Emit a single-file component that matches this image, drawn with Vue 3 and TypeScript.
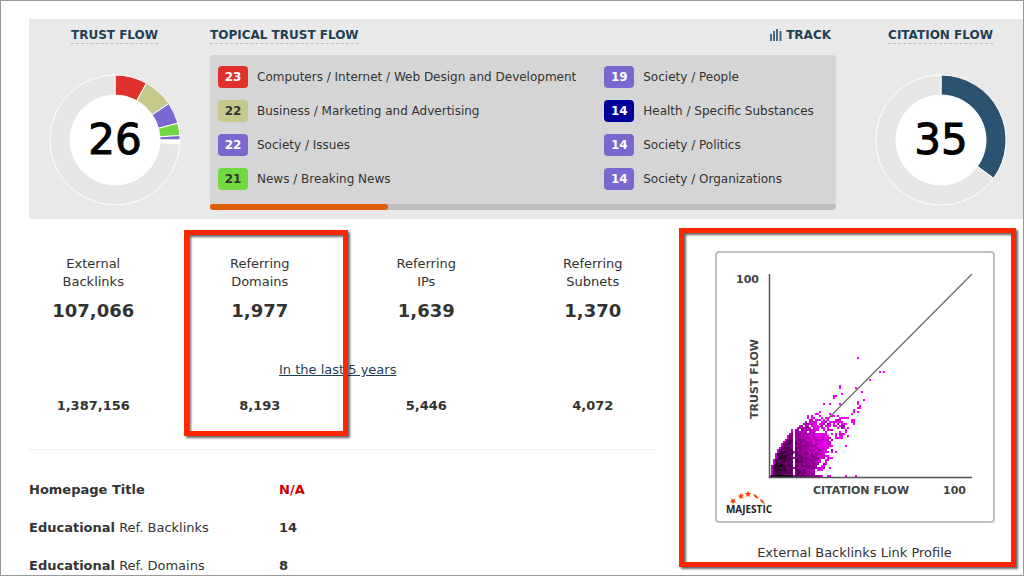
<script setup lang="ts">
interface Topic {
  score: number
  label: string
  bg: string
  dark?: boolean
}

interface Metric {
  lines: [string, string]
  current: string
  historic: string
}

interface Cell {
  x: number
  y: number
  fill: string
}

const topics: Topic[] = [
  { score: 23, label: 'Computers / Internet / Web Design and Development', bg: '#e0322d' },
  { score: 22, label: 'Business / Marketing and Advertising', bg: '#c6c98b', dark: true },
  { score: 22, label: 'Society / Issues', bg: '#7a67d0' },
  { score: 21, label: 'News / Breaking News', bg: '#72d941', dark: true },
  { score: 19, label: 'Society / People', bg: '#7a67d0' },
  { score: 14, label: 'Health / Specific Substances', bg: '#000099' },
  { score: 14, label: 'Society / Politics', bg: '#7a67d0' },
  { score: 14, label: 'Society / Organizations', bg: '#7a67d0' },
]

const metrics: Metric[] = [
  { lines: ['External', 'Backlinks'], current: '107,066', historic: '1,387,156' },
  { lines: ['Referring', 'Domains'], current: '1,977', historic: '8,193' },
  { lines: ['Referring', 'IPs'], current: '1,639', historic: '5,446' },
  { lines: ['Referring', 'Subnets'], current: '1,370', historic: '4,072' },
]

const sector = (from: number, to: number): string => {
  const at = (deg: number, r: number): string => {
    const a = (deg * Math.PI) / 180
    return `${(66 + r * Math.sin(a)).toFixed(2)} ${(66 - r * Math.cos(a)).toFixed(2)}`
  }
  const large = to - from > 180 ? 1 : 0
  return `M${at(from, 65)}A65 65 0 ${large} 1 ${at(to, 65)}L${at(to, 45)}A45 45 0 ${large} 0 ${at(from, 45)}Z`
}

const trustSlices = [
  { d: sector(0, 29), fill: '#e0322d' },
  { d: sector(29, 56), fill: '#c6c98b' },
  { d: sector(56, 75), fill: '#7a67d0' },
  { d: sector(75, 86), fill: '#72d941' },
  { d: sector(86, 90), fill: '#7a67d0' },
  { d: sector(90, 93.6), fill: '#ffffff' },
  { d: sector(93.6, 360), fill: '#e6e6e4' },
]

const citationSlices = [
  { d: sector(0, 126), fill: '#2b526e' },
  { d: sector(126, 360), fill: '#e6e6e4' },
]

// Scatter cells: one per (citation, trust) pair, two units wide.
const leftEdge = [0, 1, 1, 1, 1, 1, 2, 2, 2, 3, 3, 3, 4, 4, 5, 6, 6, 7, 8, 9, 9, 10, 11, 11, 14, 15, 16, 18, 20]
const rightEdge = [25, 22, 22, 22, 23, 23, 24, 24, 25, 26, 27, 27, 28, 28, 29, 29, 30, 30, 29, 29, 28, 27, 25, 24, 24, 24, 23, 23, 23]
const farEdge = [26, 24, 25, 26, 28, 29, 28, 29, 30, 30, 30, 30, 31, 31, 31, 31, 31, 32, 33, 36, 37, 37, 38, 38, 39, 38, 37, 36, 36]
const outliers: [number, number][] = [
  [44, 59], [55, 52], [57, 52], [50, 48], [43, 44], [46, 42], [47, 38], [35, 45], [35, 44], [36, 41],
  [32, 40], [33, 40], [32, 39], [27, 36], [30, 36], [35, 36], [44, 37], [44, 36], [45, 35], [45, 34],
  [44, 34], [42, 33], [44, 32], [42, 32], [41, 31], [25, 32], [24, 31], [23, 31], [25, 30], [19, 30],
  [19, 29], [21, 30], [21, 29], [22, 29], [31, 30], [32, 30], [34, 30], [30, 31], [29, 29], [28, 29],
  [27, 28], [26, 29], [35, 29], [36, 29], [37, 29], [38, 29], [39, 29], [41, 28], [42, 28], [42, 27],
  [42, 26], [41, 27], [33, 28], [33, 27], [30, 27], [31, 27], [32, 26], [36, 26], [37, 26], [38, 26],
  [39, 24], [38, 23], [39, 20], [38, 15], [33, 12], [31, 12], [31, 9], [30, 4], [38, 0], [43, 0],
  [29, 0], [30, 0], [26, 29], [27, 27], [24, 28], [25, 28], [26, 27],
]

const noise = (a: number, b: number): number => {
  const v = Math.sin(a * 127.1 + b * 311.7) * 43758.5453
  return v - Math.floor(v)
}

const shade = (c: number, r: number): string => {
  let level: number
  if (r === 0) {
    level = c < 12 ? 12 : 30 + c * 5
  } else {
    level = 55 + Math.max(0, c - 4) * 6 + Math.max(0, r - 8) * 3
    level += (noise(c, r) - 0.5) * 70
  }
  if (c === (leftEdge[r] ?? 0)) level = 200
  if (c >= 26 && r > 0) level = Math.max(level, 200)
  const v = Math.round(Math.min(235, Math.max(18, level)))
  return `rgb(${v},0,${v})`
}

const cells: Cell[] = []
const place = (c: number, r: number, fill: string): void => {
  cells.push({ x: 52 + c * 2, y: 222 - r * 2, fill })
}
leftEdge.forEach((start, r) => {
  for (let c = start; c <= farEdge[r]; c++) {
    if (c === 12) {
      if ([0, 4, 9, 12].includes(r)) place(c, r, '#b000b0')
      continue
    }
    const n = noise(c * 3 + 1, r * 7 + 2)
    if (c <= rightEdge[r]) {
      if (r > 21 && c > 14 && n < 0.22) continue
      place(c, r, shade(c, r))
    } else if (n < 0.5) {
      place(c, r, n < 0.1 ? '#a000a0' : '#f000f0')
    }
  }
})
outliers.forEach(([c, r]) => place(c, r, '#f400f4'))

const star = 'M0-3.200L1-1.100L3.200-.9L1.500.6L2 2.900L0 1.700L-2 2.900L-1.500.6L-3.200-.9L-1-1.100Z'
</script>

<template>
  <main class="page">
    <section class="flow">
      <div class="gauge">
        <h2 class="title"><span class="dotted">TRUST FLOW</span></h2>
        <svg class="donut" viewBox="0 0 132 132" role="img" aria-label="Trust flow 26">
          <circle cx="66" cy="66" r="46" fill="#fff" />
          <path v-for="(s, i) in trustSlices" :key="i" :d="s.d" :fill="s.fill" stroke="#fff" />
          <text x="66" y="80" text-anchor="middle" class="score">26</text>
        </svg>
      </div>
      <div class="topical">
        <div class="head">
          <h2 class="title"><span class="dotted">TOPICAL TRUST FLOW</span></h2>
          <button type="button" class="track">
            <svg width="12" height="14" viewBox="0 0 12 14" aria-hidden="true">
              <path d="M1 13V6M4 13V3M7 13V1M10.500 13V3" stroke="#4a6b85" stroke-width="2" fill="none" />
            </svg>
            TRACK
          </button>
        </div>
        <div class="panel">
          <ul class="topics">
            <li v-for="(t, i) in topics" :key="i">
              <span class="badge" :class="{ dark: t.dark }" :style="{ background: t.bg }">{{ t.score }}</span>
              {{ t.label }}
            </li>
          </ul>
          <div class="scroll"><div class="thumb"></div></div>
        </div>
      </div>
      <div class="gauge">
        <h2 class="title"><span class="dotted">CITATION FLOW</span></h2>
        <svg class="donut" viewBox="0 0 132 132" role="img" aria-label="Citation flow 35">
          <circle cx="66" cy="66" r="46" fill="#fff" />
          <path v-for="(s, i) in citationSlices" :key="i" :d="s.d" :fill="s.fill" stroke="#fff" />
          <text x="66" y="80" text-anchor="middle" class="score">35</text>
        </svg>
      </div>
    </section>

    <div class="lower">
      <section class="stats">
        <table class="metrics">
          <thead>
            <tr>
              <th v-for="m in metrics" :key="m.lines.join()" scope="col">{{ m.lines[0] }}<br />{{ m.lines[1] }}</th>
            </tr>
          </thead>
          <tbody>
            <tr class="current">
              <td v-for="m in metrics" :key="m.current">{{ m.current }}</td>
            </tr>
            <tr class="period">
              <td colspan="4"><a href="#history">In the last 5 years</a></td>
            </tr>
            <tr class="historic">
              <td v-for="m in metrics" :key="m.historic">{{ m.historic }}</td>
            </tr>
          </tbody>
        </table>
        <div class="mark domains"></div>
        <table class="details">
          <tbody>
            <tr>
              <th scope="row"><b>Homepage Title</b></th>
              <td class="missing">N/A</td>
            </tr>
            <tr>
              <th scope="row"><b>Educational</b> Ref. Backlinks</th>
              <td>14</td>
            </tr>
            <tr>
              <th scope="row"><b>Educational</b> Ref. Domains</th>
              <td>8</td>
            </tr>
          </tbody>
        </table>
      </section>

      <section class="profile">
        <figure>
          <svg class="plot" viewBox="0 0 276 268" role="img" aria-label="External backlinks link profile">
            <path d="M52 225L255 21" stroke="#666" stroke-width="1.200" />
            <rect v-for="(c, i) in cells" :key="i" :x="c.x" :y="c.y" width="2" height="2" :fill="c.fill" shape-rendering="crispEdges" />
            <path d="M52.500 21V224.500H255" stroke="#555" stroke-width="1.500" fill="none" />
            <text x="42" y="30" text-anchor="end" class="axis">100</text>
            <text x="249" y="241" text-anchor="end" class="axis">100</text>
            <text x="144" y="241" text-anchor="middle" class="axis">CITATION FLOW</text>
            <text transform="translate(41 126) rotate(-90)" text-anchor="middle" class="axis">TRUST FLOW</text>
            <g fill="#f03a12" stroke="#ffb35c" stroke-width=".3">
              <path :d="star" transform="translate(16 248) rotate(-30)" />
              <path :d="star" transform="translate(24 243) rotate(-15)" />
              <path :d="star" transform="translate(31 241)" />
              <path d="M36 241L39 242L42 245.500L38 244.500Z" />
              <path d="M43 245.500L46 247.500L48 251.500L44 249Z" />
            </g>
            <text x="32" y="260" text-anchor="middle" class="brand">MAJESTIC</text>
          </svg>
          <figcaption>External Backlinks Link Profile</figcaption>
          <div class="mark whole"></div>
        </figure>
      </section>
    </div>
  </main>
</template>

<style>
body {
  margin: 0;
  background: #fff;
}
</style>

<style scoped>
.page {
  box-sizing: border-box;
  height: 100vh;
  overflow: hidden;
  padding: 18px 0 0 9px;
  border: 1px solid #999;
  background: #fff;
  color: #333;
  font: 13px/18px "DejaVu Sans", Verdana, sans-serif;
}

.flow {
  display: grid;
  grid-template-columns: 171px 1fr 165px;
  box-sizing: border-box;
  height: 200px;
  margin-left: 19px;
  background: #e9e9e9;
  font-size: 12px;
}

.gauge {
  display: flex;
  flex-direction: column;
  align-items: center;
  padding-top: 8px;
}

.title {
  margin: 0;
  color: #1f3f55;
  font-size: 12px;
  line-height: 16px;
}

.dotted {
  display: block;
  border-bottom: 1px dashed #bbb;
}

.donut {
  width: 132px;
  height: 132px;
  margin-top: 30px;
}

.score {
  fill: #000;
  stroke: #000;
  stroke-width: 1px;
  font: 42px "DejaVu Sans", Verdana, sans-serif;
}

.topical {
  margin: 0 22px 0 10px;
  padding-top: 8px;
}

.head {
  display: flex;
  justify-content: space-between;
  align-items: flex-start;
}

.track {
  display: flex;
  align-items: center;
  gap: 4px;
  margin: 0;
  padding: 0 5px 0 0;
  border: 0;
  background: none;
  color: #1f3f55;
  font: bold 12px/16px "DejaVu Sans", Verdana, sans-serif;
}

.panel {
  display: flex;
  flex-direction: column;
  margin-top: 11px;
  border-radius: 4px;
  background: #d5d5d5;
}

.topics {
  display: grid;
  grid-template-columns: 5fr 3fr;
  grid-template-rows: repeat(4, 22px);
  grid-auto-flow: column;
  row-gap: 12px;
  margin: 0;
  padding: 11px 0 14px 8px;
  list-style: none;
}

.topics li {
  display: flex;
  align-items: center;
  gap: 9px;
  white-space: nowrap;
}

.badge {
  width: 30px;
  border-radius: 4px;
  color: #fff;
  font-weight: bold;
  line-height: 22px;
  text-align: center;
}

.badge.dark {
  color: #333;
}

.scroll {
  height: 6px;
  border-radius: 3px;
  background: #bdbdbd;
}

.thumb {
  width: 28.5%;
  height: 6px;
  border-radius: 3px;
  background: #e25c04;
}

.lower {
  display: grid;
  grid-template-columns: 666px 1fr;
}

.stats {
  position: relative;
}

.metrics {
  width: 100%;
  table-layout: fixed;
  border-collapse: collapse;
  text-align: center;
}

.metrics th,
.metrics td {
  padding: 0;
}

.metrics th {
  padding-top: 36px;
  font-weight: normal;
}

.current td {
  height: 40px;
  font-size: 18px;
  font-weight: bold;
}

.metrics .period td {
  padding: 30px 0 18px 269px;
  text-align: left;
}

.period a {
  color: #1f3f55;
}

.historic td {
  font-weight: bold;
}

.details {
  width: calc(100% - 39px);
  margin: 34px 20px 0 19px;
  border-top: 1px solid #eee;
  border-collapse: separate;
  border-spacing: 0;
  padding-top: 21px;
  text-align: left;
}

.details th {
  width: 250px;
  height: 38px;
  padding: 0;
  font-weight: normal;
}

.details td {
  padding: 0;
  font-weight: bold;
}

.details .missing {
  color: #c00;
}

.mark {
  position: absolute;
  box-sizing: border-box;
  border: 5px solid #ff2600;
  filter: drop-shadow(2px 2px 1px rgba(0, 0, 0, 0.6));
  pointer-events: none;
}

.domains {
  top: 11px;
  left: 174px;
  width: 164px;
  height: 206px;
}

.profile {
  height: 353px;
  padding: 9px 7px 0 3px;
  border-bottom: 1px solid #ddd;
}

figure {
  position: relative;
  display: flex;
  flex-direction: column;
  align-items: center;
  box-sizing: border-box;
  height: 339px;
  margin: 0;
  padding: 23px 0 0 14px;
}

.plot {
  width: 276px;
  height: 268px;
  border: 2px solid #c0c0c0;
  border-radius: 4px;
}

.axis {
  fill: #444;
  font: bold 11px "DejaVu Sans", Verdana, sans-serif;
}

.brand {
  fill: #222;
  font: bold 10px "Open Sans", sans-serif;
}

figcaption {
  margin-top: 21px;
}

.whole {
  inset: 0;
}
</style>
